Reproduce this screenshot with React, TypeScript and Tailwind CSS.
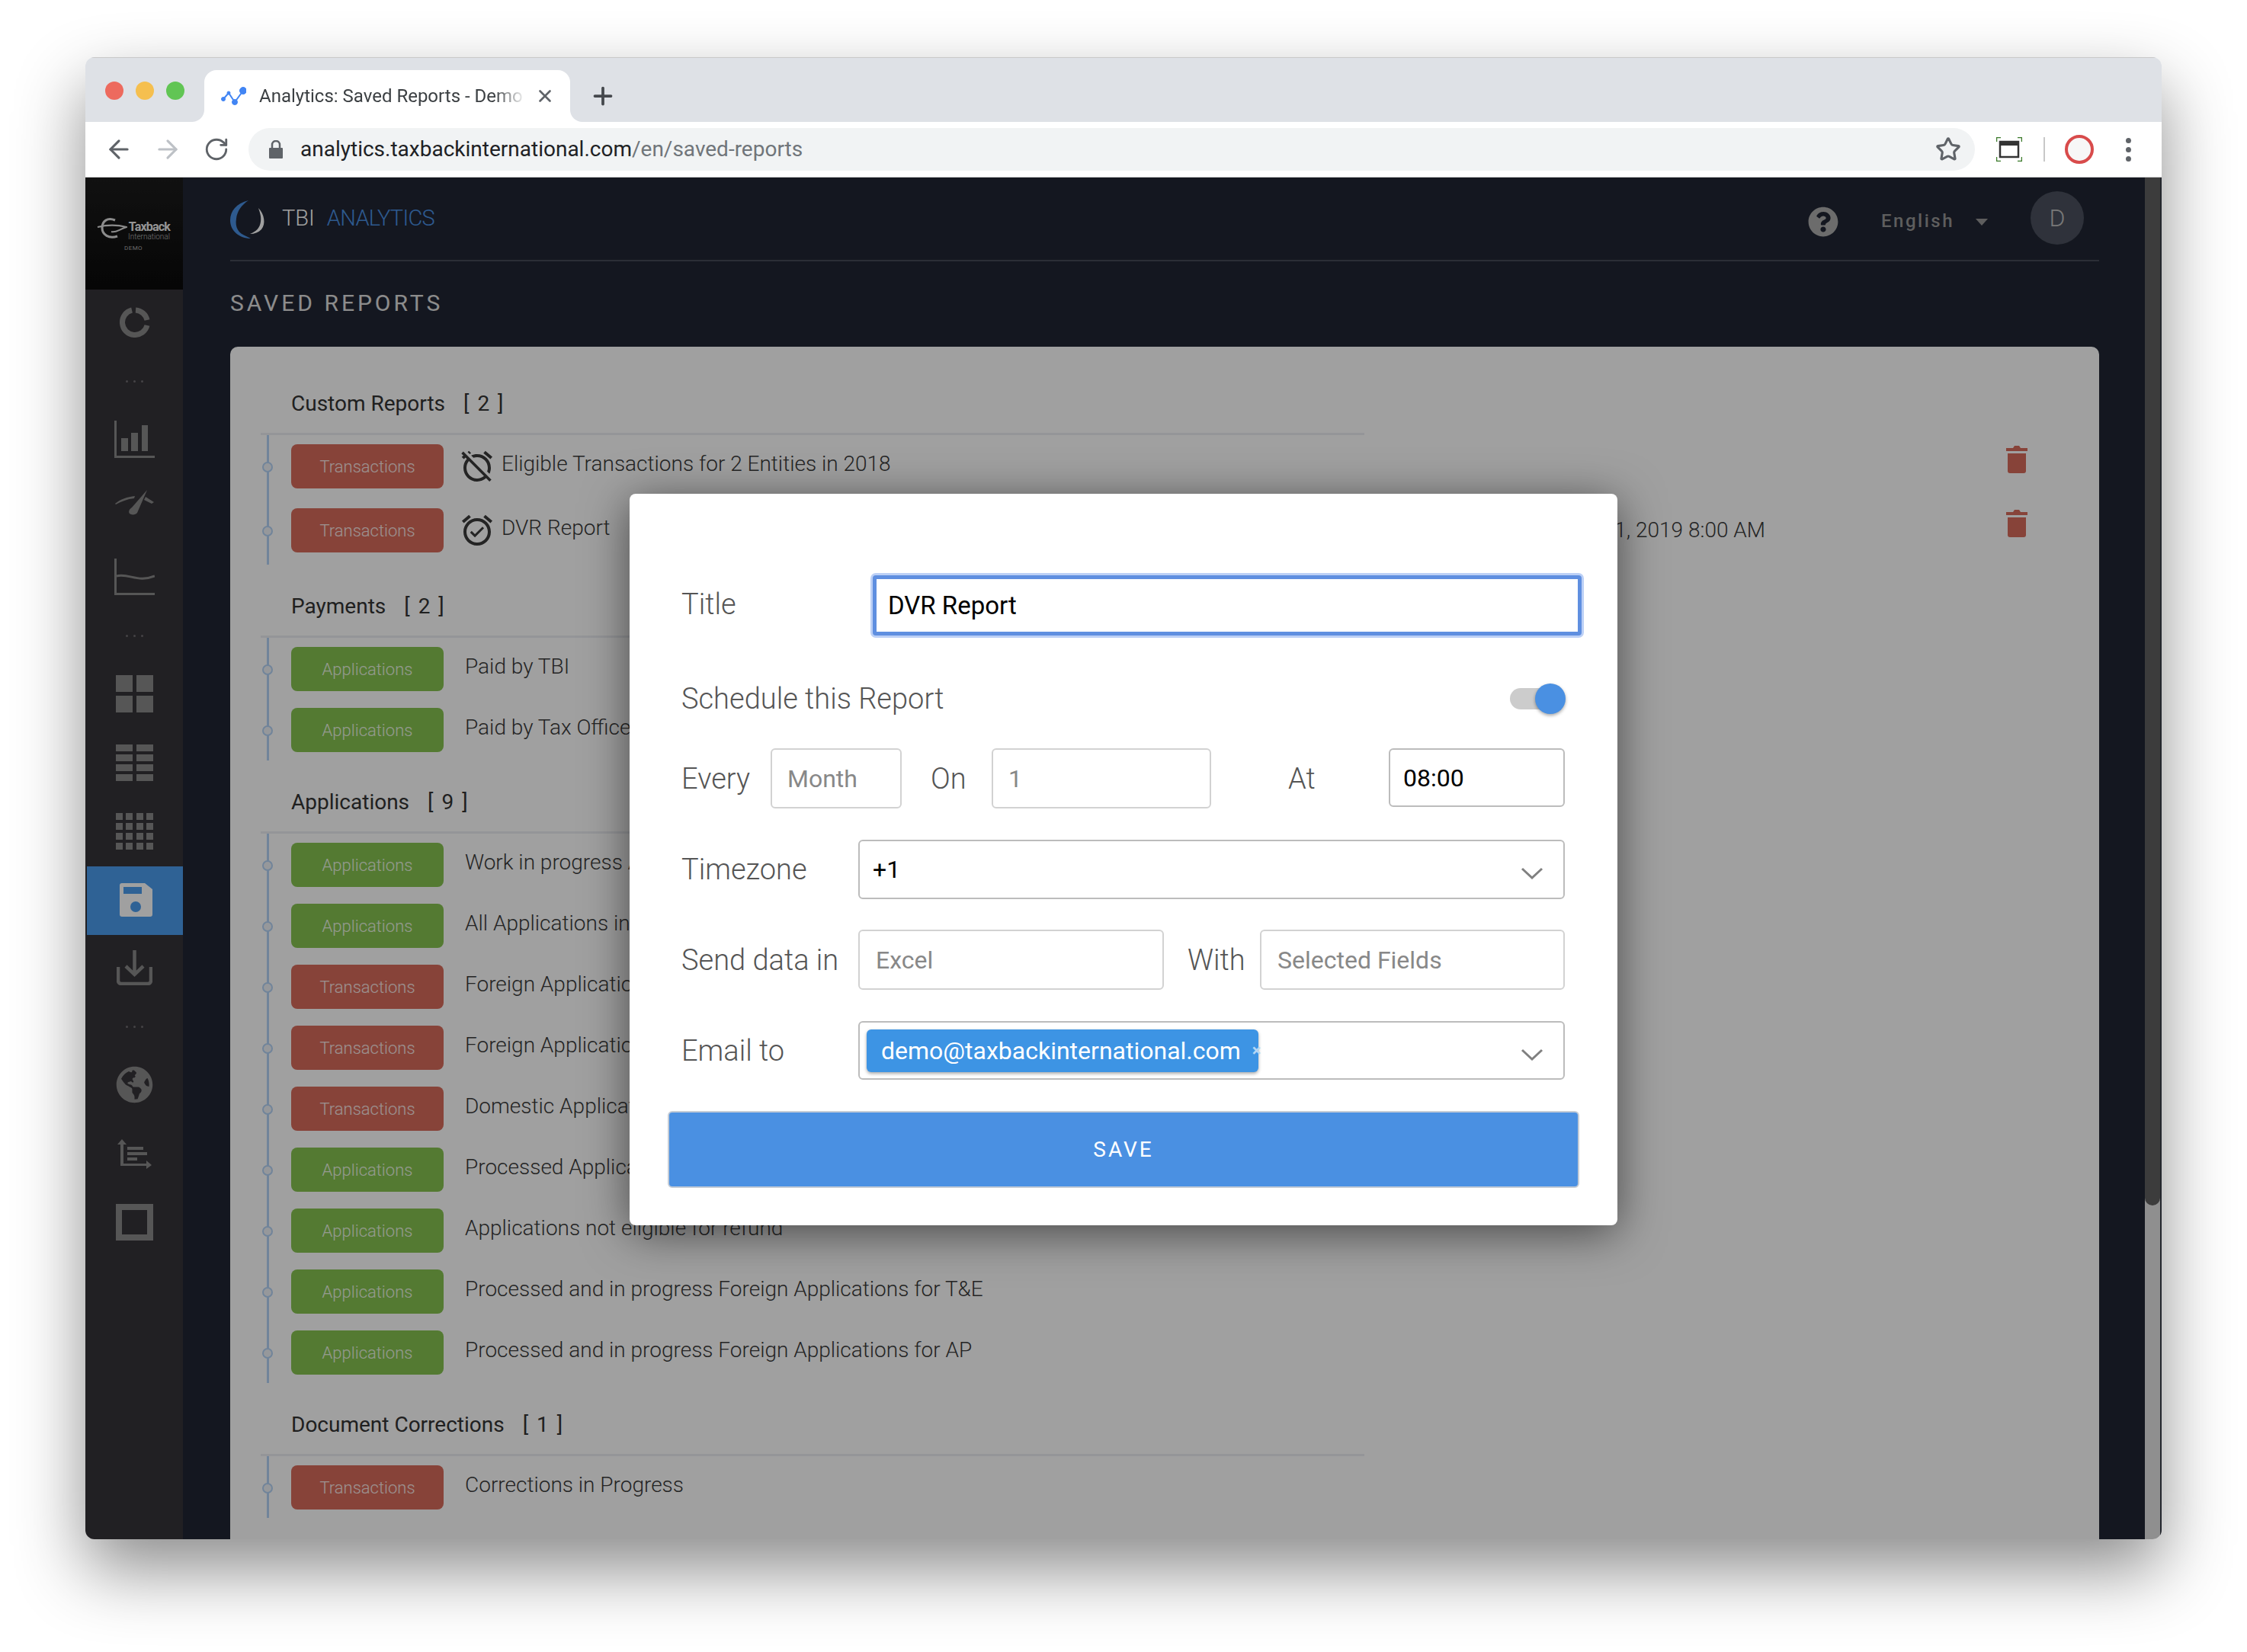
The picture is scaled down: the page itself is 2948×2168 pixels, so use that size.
import { ArrowLeft, ArrowRight, Plus, RotateCw, Star, X } from "lucide-react";
import { FaGlobeAmericas, FaQuestionCircle } from "react-icons/fa";
import { MdAlarmOff, MdAlarmOn } from "react-icons/md";

type Kind = "Transactions" | "Applications";

interface Report {
  kind: Kind;
  title: string;
  alarm?: "on" | "off";
  date?: string;
  trash?: boolean;
}

interface Group {
  name: string;
  reports: Report[];
  tight?: boolean;
}

const groups: Group[] = [
  {
    name: "Custom Reports",
    reports: [
      { kind: "Transactions", title: "Eligible Transactions for 2 Entities in 2018", alarm: "off", trash: true },
      { kind: "Transactions", title: "DVR Report", alarm: "on", date: "Feb 1, 2019 8:00 AM", trash: true },
    ],
  },
  {
    name: "Payments",
    tight: true,
    reports: [
      { kind: "Applications", title: "Paid by TBI" },
      { kind: "Applications", title: "Paid by Tax Office" },
    ],
  },
  {
    name: "Applications",
    tight: true,
    reports: [
      { kind: "Applications", title: "Work in progress Applications" },
      { kind: "Applications", title: "All Applications in progress" },
      { kind: "Transactions", title: "Foreign Applications for T&E" },
      { kind: "Transactions", title: "Foreign Applications for AP" },
      { kind: "Transactions", title: "Domestic Applications" },
      { kind: "Applications", title: "Processed Applications" },
      { kind: "Applications", title: "Applications not eligible for refund" },
      { kind: "Applications", title: "Processed and in progress Foreign Applications for T&E" },
      { kind: "Applications", title: "Processed and in progress Foreign Applications for AP" },
    ],
  },
  {
    name: "Document Corrections",
    tight: true,
    reports: [{ kind: "Transactions", title: "Corrections in Progress" }],
  },
];

const Trash = () => (
  <svg width="28" height="36" viewBox="0 0 28 36" className="text-[#d76c5c]" fill="currentColor">
    <path d="M0 3h9l2-3h6l2 3h9v4H0z" />
    <path d="M2 10h24v23a3 3 0 0 1-3 3H5a3 3 0 0 1-3-3z" />
  </svg>
);

const Dots = ({ className }: { className: string }) => (
  <div className={`flex gap-[7px] ${className}`}>
    <span className="w-[3px] h-[3px] rounded-full bg-[#6e6c70]" />
    <span className="w-[3px] h-[3px] rounded-full bg-[#6e6c70]" />
    <span className="w-[3px] h-[3px] rounded-full bg-[#6e6c70]" />
  </div>
);

const Sidebar = () => (
  <div className="w-[128px] shrink-0 bg-[#363338] flex flex-col text-[#8a8a8a]">
    <div className="h-[147px] bg-gradient-to-b from-[#1c1c1c] to-[#0a0a0a] flex flex-col items-center justify-center pt-[4px] pr-[2px]">
      <div className="flex items-start">
        <svg width="40" height="28" viewBox="0 0 40 28" fill="none" stroke="#e0e0e0">
          <path d="M24 3C14-1 7 4 7 13c0 9 9 15 20 11" strokeWidth="3" />
          <path d="M1 12c12-3 26-3 38 0-10 3-14 8-20 6" strokeWidth="2" />
        </svg>
        <div className="flex flex-col items-end leading-none ml-[1px] pt-[4px]">
          <span className="text-[16px] font-bold tracking-tighter text-[#eeeeee]">Taxback</span>
          <span className="text-[10px] font-light text-[#bbbbbb]">International</span>
        </div>
      </div>
      <span className="text-[8px] tracking-wider text-[#aaaaaa] mt-[4px]">DEMO</span>
    </div>
    <div className="flex flex-col items-center">
      <svg width="41" height="40" viewBox="0 0 41 40" fill="none" stroke="currentColor" strokeWidth="7" className="mt-[23px]">
        <path d="M22 4a16.5 16.5 0 0 1 15 13" />
        <path d="M37 24A16.5 16.5 0 1 1 17 4" />
      </svg>
      <Dots className="mt-[56px]" />
      <svg width="53" height="49" viewBox="0 0 53 49" fill="currentColor" className="mt-[50px]">
        <path d="M0 0h3v46h50v3H0z" />
        <rect x="9" y="23" width="9" height="17" />
        <rect x="22" y="16" width="9" height="24" />
        <rect x="36" y="6" width="8" height="34" />
      </svg>
      <svg width="51" height="33" viewBox="0 0 51 33" fill="currentColor" className="mt-[42px]">
        <path d="M0 18C7 12 16 9 26 8l-1 3C16 12 8 15 1 19z" />
        <path d="M42 0 L29 30c-2 3-8 3-10 1-2-3 0-6 3-8z" />
        <path d="M40 9l11 7-3 2-10-5z" />
      </svg>
      <svg width="53" height="48" viewBox="0 0 53 48" fill="currentColor" className="mt-[57px]">
        <path d="M0 0h3v45h50v3H0z" />
        <path d="M3 23c16-4 28 9 50 0" fill="none" stroke="currentColor" strokeWidth="3" />
      </svg>
      <Dots className="mt-[52px]" />
      <svg width="49" height="49" viewBox="0 0 49 49" fill="currentColor" className="mt-[50px]">
        <rect x="0" y="0" width="22" height="22" />
        <rect x="27" y="0" width="22" height="22" />
        <rect x="0" y="27" width="22" height="22" />
        <rect x="27" y="27" width="22" height="22" />
      </svg>
      <svg width="49" height="48" viewBox="0 0 49 48" fill="currentColor" className="mt-[42px]">
        <rect x="0" y="0" width="22" height="9" />
        <rect x="27" y="0" width="22" height="9" />
        <rect x="0" y="13" width="22" height="9" />
        <rect x="27" y="13" width="22" height="9" />
        <rect x="0" y="26" width="22" height="9" />
        <rect x="27" y="26" width="22" height="9" />
        <rect x="0" y="39" width="22" height="9" />
        <rect x="27" y="39" width="22" height="9" />
      </svg>
      <svg width="49" height="48" viewBox="0 0 49 48" fill="currentColor" className="mt-[42px]">
        <path d="M0 0h9v9H0zM13 0h9v9h-9zM27 0h9v9h-9zM40 0h9v9h-9zM0 13h9v9H0zM13 13h9v9h-9zM27 13h9v9h-9zM40 13h9v9h-9zM0 26h9v9H0zM13 26h9v9h-9zM27 26h9v9h-9zM40 26h9v9h-9zM0 39h9v9H0zM13 39h9v9h-9zM27 39h9v9h-9zM40 39h9v9h-9z" />
      </svg>
    </div>
    <div className="h-[90px] mt-[22px] ml-[2px] bg-[#4b9cee] flex items-center justify-center pl-[2px] pb-[2px]">
      <svg width="43" height="44" viewBox="0 0 43 44">
        <path d="M3 0h30l10 8v33a3 3 0 0 1-3 3H3a3 3 0 0 1-3-3V3a3 3 0 0 1 3-3z" fill="#ffffff" />
        <rect x="5" y="5" width="24" height="9" fill="#4b9cee" />
        <ellipse cx="21" cy="31" rx="7" ry="7" fill="#4b9cee" />
      </svg>
    </div>
    <div className="flex flex-col items-center">
      <svg width="47" height="46" viewBox="0 0 47 46" fill="none" stroke="currentColor" strokeWidth="4.5" className="mt-[20px]">
        <path d="M2 22v18a4 4 0 0 0 4 4h35a4 4 0 0 0 4-4V22" />
        <path d="M23.5 0v30M12 21l11.5 11L35 21" />
      </svg>
      <Dots className="mt-[53px]" />
      <FaGlobeAmericas size={49} className="mt-[50px]" />
      <svg width="45" height="39" viewBox="0 0 45 39" fill="currentColor" className="mt-[47px]">
        <path d="M6 0l6 7H8v25h30v-4l7 6-7 5v-4H4V7H0z" />
        <rect x="13" y="10" width="21" height="4" />
        <rect x="13" y="17" width="26" height="4" />
        <rect x="13" y="24" width="13" height="4" />
      </svg>
      <div className="w-[49px] h-[48px] border-[8px] border-current mt-[46px]" />
    </div>
  </div>
);

const Row = ({ report, index }: { report: Report; index: number }) => (
  <div className="relative flex items-center h-[58px] w-[2278px]" key={index}>
    <span className="absolute -left-[38px] top-[23px] w-[14px] h-[14px] rounded-full bg-[#f0f3f8] border-[2px] border-[#b4d3f5]" />
    <div
      className={`w-[200px] h-[58px] rounded-[8px] flex items-center justify-center text-[22px] font-light text-white/85 ${
        report.kind === "Transactions" ? "bg-[#d76c5c]" : "bg-[#86c350]"
      }`}
    >
      {report.kind}
    </div>
    {report.alarm === "off" && <MdAlarmOff size={48} className="ml-[20px] text-[#3a3a3a] shrink-0" />}
    {report.alarm === "on" && <MdAlarmOn size={48} className="ml-[20px] text-[#3a3a3a] shrink-0" />}
    <span className={`text-[28px] font-light text-[#3a3a3a] -mt-[6px] ${report.alarm ? "ml-[8px]" : "ml-[28px]"}`}>
      {report.title}
    </span>
    {report.date && <span className="ml-auto mr-[316px] text-[28px] font-light text-[#3a3a3a]">{report.date}</span>}
    {report.trash && (
      <span className={`-mt-[18px] ${report.date ? "" : "ml-auto"}`}>
        <Trash />
      </span>
    )}
  </div>
);

const Section = ({ group, first }: { group: Group; first: boolean }) => (
  <div className={first ? "" : "mt-[35px]"}>
    <div className="h-[40px] pl-[40px] flex items-center gap-[24px] text-[28px] text-[#333333]">
      <span>{group.name}</span>
      <span className="tracking-[2px]">[ {group.reports.length} ]</span>
    </div>
    <div className="mt-[18px] h-[3px] w-[1448px] bg-[#ecedf3]" />
    <div
      className={`ml-[8px] pl-[29px] border-l-[3px] border-[#b4d3f5] flex flex-col pt-[12px] ${
        group.tight ? "gap-[22px] pb-[11px]" : "gap-[26px] pb-[16px]"
      }`}
    >
      {group.reports.map((report, i) => (
        <Row key={i} report={report} index={i} />
      ))}
    </div>
  </div>
);

const Field = ({ className, dark, children }: { className: string; dark?: boolean; children: React.ReactNode }) => (
  <div
    className={`relative flex items-center bg-white rounded-[6px] border-[2px] text-[32px] ${
      dark ? "border-[#bcbcbc] text-black" : "border-[#d2d2d2] text-[#888888]"
    } ${className}`}
  >
    {children}
  </div>
);

const Chevron = () => (
  <svg width="30" height="16" viewBox="0 0 30 16" fill="none" stroke="#808080" strokeWidth="3" className="absolute right-[26px] top-[34px]">
    <path d="M2 2l13 12L28 2" />
  </svg>
);

const Label = ({ className, children }: { className?: string; children: React.ReactNode }) => (
  <span className={`text-[38px] font-light text-[#555555] leading-none whitespace-nowrap ${className ?? ""}`}>{children}</span>
);

const Modal = () => (
  <div className="absolute left-[714px] top-[415px] w-[1296px] bg-white rounded-[8px] shadow-[0_10px_60px_rgba(0,0,0,0.55)] pt-[107px] pb-[49px] pl-[68px] pr-[69px] flex flex-col">
    <div className="flex items-center">
      <Label className="w-[251px] shrink-0 -mt-[4px]">Title</Label>
      <div className="flex-1 -mr-[22px] h-[79px] bg-white rounded-[4px] border-[5px] border-[#5f8fe0] ring-[3px] ring-[#bcd0f6] pl-[15px] flex items-center text-[33px] text-black">
        DVR Report
      </div>
    </div>
    <div className="flex items-center justify-between mt-[63px] h-[40px]">
      <Label>Schedule this Report</Label>
      <div className="relative w-[72px] h-[28px] rounded-full bg-[#cccccc]">
        <span className="absolute right-[-1px] -top-[6px] w-[40px] h-[40px] rounded-full bg-[#4a90e2] shadow-[0_2px_4px_rgba(0,0,0,0.35)]" />
      </div>
    </div>
    <div className="flex items-center mt-[45px]">
      <Label className="w-[117px]">Every</Label>
      <Field className="w-[172px] h-[79px] pl-[20px]">Month</Field>
      <Label className="ml-[38px] w-[80px]">On</Label>
      <Field className="w-[288px] h-[79px] pl-[20px]">1</Field>
      <Label className="ml-[101px] w-[132px]">At</Label>
      <Field dark className="w-[231px] h-[77px] pl-[17px] -mt-[2px]">08:00</Field>
    </div>
    <div className="flex items-center mt-[41px]">
      <Label className="w-[232px]">Timezone</Label>
      <Field dark className="flex-1 h-[78px] pl-[17px]">
        +1
        <Chevron />
      </Field>
    </div>
    <div className="flex items-center mt-[40px]">
      <Label className="w-[232px]">Send data in</Label>
      <Field className="w-[401px] h-[79px] pl-[21px]">Excel</Field>
      <Label className="ml-[31px] w-[95px]">With</Label>
      <Field className="flex-1 h-[79px] pl-[21px]">Selected Fields</Field>
    </div>
    <div className="flex items-center mt-[41px]">
      <Label className="w-[232px]">Email to</Label>
      <Field dark className="flex-1 h-[77px] pl-[9px]">
        <div className="w-[514px] h-[56px] rounded-[6px] bg-[#3d94e4] shadow-[0_2px_4px_rgba(0,0,0,0.35)] flex items-center pl-[19px] text-white">
          demo@taxbackinternational.com
          <span className="ml-[15px] text-[#b5d6f5] text-[22px] font-bold">×</span>
        </div>
        <Chevron />
      </Field>
    </div>
    <div className="mt-[41px] -ml-[18px] -mr-[19px] h-[101px] rounded-[6px] bg-[#4a90e2] border-[2px] border-[#c4ccd6] flex items-center justify-center text-[28px] tracking-[3px] text-white">
      SAVE
    </div>
  </div>
);

const Header = () => (
  <div className="h-[110px] flex items-center border-b-[2px] border-[#454a56] shrink-0">
    <svg width="48" height="50" viewBox="0 0 48 50" className="mt-[2px]">
      <path d="M24 0C8 4 0 14 0 26c0 14 12 24 27 24-2-1-4-2-6-3C11 43 6 36 8 24 9 14 15 6 24 0z" fill="#4a90e2" />
      <path d="M37 10c8 8 10 21 4 28-4 4-9 6-15 6 8-3 13-8 14-16 1-7-1-12-3-18z" fill="#ffffff" />
    </svg>
    <span className="ml-[20px] text-[29px] font-light text-white">TBI</span>
    <span className="ml-[16px] text-[29px] font-light text-[#4a90e2] tracking-tight">ANALYTICS</span>
    <FaQuestionCircle size={40} className="ml-auto text-[#adadad] mt-[8px]" />
    <span className="ml-[56px] text-[24px] font-medium tracking-[2.5px] text-[#979797] mt-[6px]">English</span>
    <span className="ml-[28px] mt-[8px] w-0 h-0 border-x-[8px] border-x-transparent border-t-[9px] border-t-[#979797]" />
    <div className="ml-[56px] mr-[20px] w-[70px] h-[70px] rounded-full bg-[#4b515e] flex items-center justify-center text-[32px] font-light text-[#c0c0c0] -mt-[2px]">
      D
    </div>
  </div>
);

const Chrome = () => (
  <>
    <div className="h-[85px] bg-[#dee1e6] flex items-end shrink-0 border-t border-[#c9c9c9]">
      <div className="flex gap-[16px] ml-[26px] mb-[29px]">
        <span className="w-[24px] h-[24px] rounded-full bg-[#ed6a5e]" />
        <span className="w-[24px] h-[24px] rounded-full bg-[#f5bf4f]" />
        <span className="w-[24px] h-[24px] rounded-full bg-[#61c554]" />
      </div>
      <div className="relative ml-[26px] w-[480px] h-[68px] bg-white rounded-t-[16px] flex items-center">
        <span className="absolute -left-[16px] bottom-0 w-[16px] h-[16px] bg-white">
          <span className="block w-full h-full bg-[#dee1e6] rounded-br-[16px]" />
        </span>
        <span className="absolute -right-[16px] bottom-0 w-[16px] h-[16px] bg-white">
          <span className="block w-full h-full bg-[#dee1e6] rounded-bl-[16px]" />
        </span>
        <svg width="33" height="24" viewBox="0 0 33 24" className="ml-[22px] shrink-0" fill="#4285f4" stroke="#4285f4">
          <path d="M3 16L10 8l8 12L29 5" fill="none" strokeWidth="2" />
          <circle cx="3" cy="16" r="2.5" />
          <circle cx="10" cy="8" r="2" />
          <circle cx="18" cy="20" r="3.5" />
          <circle cx="29" cy="5" r="4.5" />
        </svg>
        <span className="ml-[17px] w-[350px] overflow-hidden whitespace-nowrap text-[24px] text-[#3c4043] [mask-image:linear-gradient(to_right,black_88%,transparent)]">
          Analytics: Saved Reports - Demo
        </span>
        <X size={26} strokeWidth={2.5} className="ml-[12px] text-[#5f6368]" />
      </div>
      <Plus size={36} strokeWidth={2.5} className="ml-[25px] mb-[16px] text-[#45484d]" />
    </div>
    <div className="h-[73px] bg-white flex items-center shrink-0 border-b border-[#c8c8c8] relative">
      <ArrowLeft size={38} strokeWidth={2} className="ml-[25px] text-[#5f6368]" />
      <ArrowRight size={38} strokeWidth={2} className="ml-[26px] text-[#bdc1c6]" />
      <RotateCw size={34} strokeWidth={2} className="ml-[28px] text-[#5f6368]" />
      <div className="ml-[25px] w-[2265px] h-[56px] rounded-full bg-[#f1f3f4] flex items-center">
        <svg width="18" height="24" viewBox="0 0 18 24" fill="#5f6368" className="ml-[27px]">
          <path d="M1 10h16a1 1 0 0 1 1 1v12a1 1 0 0 1-1 1H1a1 1 0 0 1-1-1V11a1 1 0 0 1 1-1z" />
          <path d="M4 11V6a5 5 0 0 1 10 0v5" fill="none" stroke="#5f6368" strokeWidth="2.5" />
        </svg>
        <span className="ml-[23px] text-[28px] text-[#202124]">
          analytics.taxbackinternational.com<span className="text-[#70757a]">/en/saved-reports</span>
        </span>
        <Star size={34} strokeWidth={2.2} className="ml-auto mr-[18px] text-[#5f6368]" />
      </div>
      <svg width="34" height="32" viewBox="0 0 34 32" className="ml-[28px]">
        <path d="M0 6V0h6M28 0h6v6M0 26v6h6M28 32h6v-6" fill="none" stroke="#3b7a2a" strokeWidth="2.5" />
        <rect x="5" y="6" width="24" height="20" fill="none" stroke="#333333" strokeWidth="2.5" />
        <rect x="5" y="6" width="24" height="5" fill="#333333" />
      </svg>
      <span className="ml-[28px] w-[2px] h-[32px] bg-[#c8c8c8]" />
      <span className="ml-[26px] w-[38px] h-[38px] rounded-full border-[4px] border-[#d84b4b] bg-[#f7f7f7]" />
      <div className="ml-[42px] flex flex-col gap-[5px]">
        <span className="w-[7px] h-[7px] rounded-full bg-[#5f6368]" />
        <span className="w-[7px] h-[7px] rounded-full bg-[#5f6368]" />
        <span className="w-[7px] h-[7px] rounded-full bg-[#5f6368]" />
      </div>
    </div>
  </>
);

export default function App() {
  return (
    <div className="w-[2948px] h-[2168px] bg-white overflow-hidden pt-[75px] pl-[112px] font-[Roboto,sans-serif]">
      <div className="w-[2724px] h-[1945px] rounded-[12px] overflow-hidden flex flex-col shadow-[0_40px_90px_rgba(0,0,0,0.45)]">
        <Chrome />
        <div className="flex-1 min-h-0 flex">
          <div className="relative flex-1 min-w-0 flex">
            <Sidebar />
            <div className="flex-1 min-w-0 flex flex-col bg-[#202633] pl-[62px] pr-[60px]">
              <Header />
              <div className="h-[112px] shrink-0 flex items-center pb-[4px] text-[30px] tracking-[4px] text-[#e0e0e0]">
                SAVED REPORTS
              </div>
              <div className="flex-1 min-h-0 overflow-hidden bg-white rounded-t-[10px] pt-[55px] pl-[40px]">
                {groups.map((group, i) => (
                  <Section key={group.name} group={group} first={i === 0} />
                ))}
              </div>
            </div>
            <div className="absolute inset-0 bg-black/[0.373]" />
            <Modal />
          </div>
          <div className="w-[22px] shrink-0 flex flex-col bg-[#8f8f8f] border-r-[2px] border-[#23262e]">
            <div className="h-[1349px] bg-[#3c3c3c] rounded-b-[10px]" />
          </div>
        </div>
      </div>
    </div>
  );
}
